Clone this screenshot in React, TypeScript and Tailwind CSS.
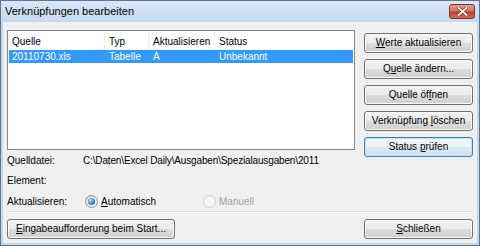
import React from 'react';

const font = "font-['Liberation_Sans',Arial,sans-serif]";

function Btn({ children, def = false, className = '' }: { children: React.ReactNode; def?: boolean; className?: string }) {
  return (
    <div
      className={`h-[20px] flex items-center justify-center whitespace-nowrap rounded-[3px] border text-[10px] leading-none text-black ${
        def
          ? 'border-[#3c7fb1] bg-[linear-gradient(#f4f9fc_0%,#e9f3f9_50%,#dbe9f2_51%,#d0e2ee_100%)] shadow-[inset_0_0_0_1px_#bfe3f8]'
          : 'border-[#707070] bg-[linear-gradient(#f2f2f2_0%,#ebebeb_50%,#dddddd_51%,#cfcfcf_100%)] shadow-[inset_0_0_0_1px_#fbfbfb]'
      } ${className}`}
    >
      {children}
    </div>
  );
}

function Radio({ checked = false, disabled = false }: { checked?: boolean; disabled?: boolean }) {
  return (
    <span
      className={`w-[13px] h-[13px] shrink-0 rounded-full border flex items-center justify-center ${
        disabled
          ? 'border-[#d2d2d2] bg-[#f4f4f4]'
          : 'border-[#8f8f8f] bg-[linear-gradient(135deg,#d8d8d8,#ffffff)]'
      }`}
    >
      {checked && (
        <span className="w-[7px] h-[7px] rounded-full bg-[radial-gradient(circle_at_35%_35%,#9fe1ff,#1d6fb0_70%,#0d4d86)]" />
      )}
    </span>
  );
}

export default function App() {
  return (
    <div className={`${font} w-[480px] h-[246px] flex flex-col bg-[#c4d7ed] border border-[#5b7696] overflow-hidden`}>
      {/* Title bar */}
      <div className="h-[21px] shrink-0 flex items-center justify-between pl-[4px] pr-[4px] bg-[linear-gradient(#d9e7f6,#c6d9ee)]">
        <span className="text-[11px] text-black leading-none whitespace-nowrap">Verknüpfungen bearbeiten</span>
        <div className="w-[26px] h-[15px] rounded-[3px] border border-[#7a3530] bg-[linear-gradient(#e6a392_0%,#d6725e_45%,#c2402b_55%,#d0664d_100%)] flex items-center justify-center">
          <svg width="11" height="9" viewBox="0 0 11 9">
            <path d="M1.5 1 L9.5 8 M9.5 1 L1.5 8" stroke="#5a2a22" strokeWidth="3" strokeLinecap="square" />
            <path d="M1.5 1 L9.5 8 M9.5 1 L1.5 8" stroke="#ffffff" strokeWidth="1.8" strokeLinecap="square" />
          </svg>
        </div>
      </div>

      {/* Client area */}
      <div className="flex-1 mx-[2px] mb-[2px] bg-[#f0f0f0] px-[4px] pt-[8px] text-[10px] text-black whitespace-nowrap">
        <div className="flex items-start h-[120px]">
          {/* List view */}
          <div className="w-[348px] h-[120px] shrink-0 bg-white border border-[#828790] pt-[1px]">
            <div className="h-[18px] flex items-center">
              <span className="w-[97px] pl-[4px] border-r border-[#ececec] h-full flex items-center">Quelle</span>
              <span className="w-[44px] pl-[4px] border-r border-[#ececec] h-full flex items-center">Typ</span>
              <span className="w-[66px] pl-[4px] border-r border-[#ececec] h-full flex items-center">Aktualisieren</span>
              <span className="pl-[4px] h-full flex items-center">Status</span>
            </div>
            <div className="h-[13px] mx-[1px] flex items-center bg-[#3399ff] text-white leading-none">
              <span className="w-[96px] pl-[3px]">20110730.xls</span>
              <span className="w-[44px] pl-[4px]">Tabelle</span>
              <span className="w-[66px] pl-[4px]">A</span>
              <span className="pl-[4px]">Unbekannt</span>
            </div>
          </div>

          {/* Buttons */}
          <div className="ml-[9px] w-[109px] pt-[3px] flex flex-col gap-[6px]">
            <Btn>
              <span><u>W</u>erte aktualisieren</span>
            </Btn>
            <Btn>
              <span>Q<u>u</u>elle ändern...</span>
            </Btn>
            <Btn>
              <span>Quelle öf<u>f</u>nen</span>
            </Btn>
            <Btn>
              <span>Verknüpfung <u>l</u>öschen</span>
            </Btn>
            <Btn def>
              <span>Status <u>p</u>rüfen</span>
            </Btn>
          </div>
        </div>

        {/* Details */}
        <div className="flex flex-col">
          <div className="h-[20px] flex items-center">
            <span className="w-[76px]">Quelldatei:</span>
            <span className="tracking-[-0.15px]">C:\Daten\Excel Daily\Ausgaben\Spezialausgaben\2011</span>
          </div>
          <div className="h-[21px] flex items-center">
            <span className="w-[76px]">Element:</span>
          </div>
          <div className="h-[20px] flex items-center">
            <span className="w-[78px]">Aktualisieren:</span>
            <label className="flex items-center gap-[3px] w-[118px]">
              <Radio checked />
              <span><u>A</u>utomatisch</span>
            </label>
            <label className="flex items-center gap-[3px] text-[#a0a0a0]">
              <Radio disabled />
              <span>Manuell</span>
            </label>
          </div>
        </div>

        <div className="h-px bg-[#dcdcdc] border-b border-white box-content" />

        <div className="mt-[6px] flex justify-between">
          <Btn className="w-[168px]">
            <span><u>E</u>ingabeaufforderung beim Start...</span>
          </Btn>
          <Btn className="w-[109px]">
            <span><u>S</u>chließen</span>
          </Btn>
        </div>
      </div>
    </div>
  );
}
